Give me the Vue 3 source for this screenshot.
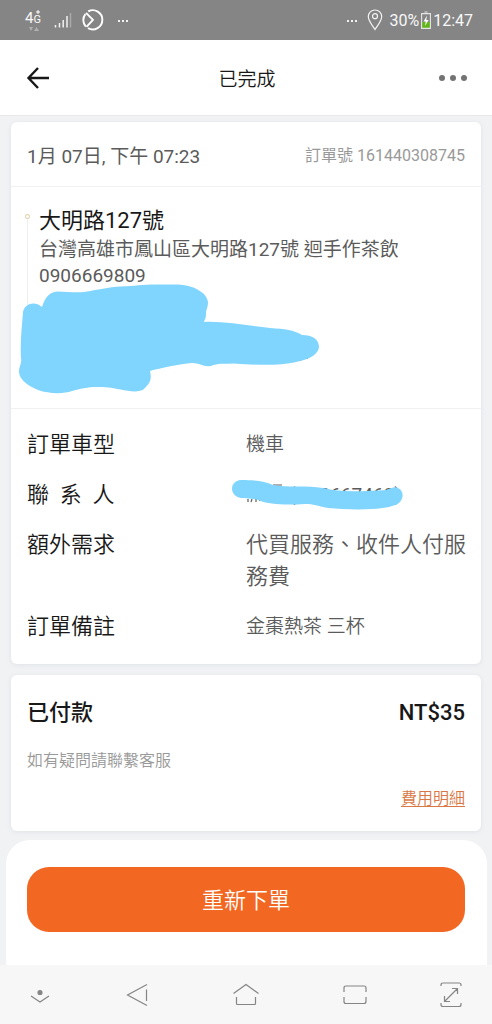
<script setup>
const details = [
  { label: '訂單車型', value: '機車' },
  { label: '聯  系  人', masked: true },
  { label: '額外需求', value: '代買服務、收件人付服務費', large: true },
  { label: '訂單備註', value: '金棗熱茶 三杯' },
]
</script>

<template>
  <div class="screen">
    <div class="status">
      <div class="status-side">
        <span class="network">
          <span class="gen">4<small>G</small></span>
          <svg width="18" height="22" viewBox="0 0 18 22" aria-hidden="true">
            <path d="M3 18h4l-2 4zM8 22h5l-2.500-4z" fill="#b0b0b0" />
            <path d="M12 1v4M10 3h4" stroke="#fff" fill="none" />
          </svg>
        </span>
        <svg class="signal" width="18" height="16" viewBox="0 0 18 16" aria-hidden="true">
          <path d="M1.500 13v2.500M5.500 11v4.500M9.200 8v7.500M13 4v11.500" stroke="#f2f2f2" stroke-width="1.500" fill="none" />
          <path d="M16.500 1v14.500" stroke="#aaa" stroke-width="1.500" />
        </svg>
        <svg class="sync" width="22" height="22" viewBox="0 0 22 22" aria-hidden="true">
          <path d="M6.200 2.400A9.600 9.600 0 1 1 6 19.200M3.800 17.600A9.600 9.600 0 0 1 3.400 5.200M4 3.800 11 10.800 4.500 17.800" stroke="#fff" stroke-width="1.900" fill="none" stroke-linejoin="round" />
        </svg>
        <span class="dots"><i></i><i></i><i></i></span>
      </div>
      <div class="status-side">
        <span class="dots"><i></i><i></i><i></i></span>
        <svg class="pin" width="16" height="22" viewBox="0 0 16 22" aria-hidden="true">
          <path d="M8 20.500C5 15.500 1.300 12 1.300 7.500a6.700 6.500 0 0 1 13.400 0C14.700 12 11 15.500 8 20.500z" stroke="#f4f4f4" stroke-width="1.200" fill="none" />
          <circle cx="8" cy="7.200" r="2.500" stroke="#f4f4f4" stroke-width="1.200" fill="none" />
        </svg>
        <span>30%</span>
        <svg class="battery" width="10" height="18" viewBox="0 0 10 18" aria-hidden="true">
          <path d="M1 11h8v6H1z" fill="#62b51b" />
          <path d="M.6 2.600h8.800v14.800H.6zM3.500 1h3" stroke="#e6e6e6" stroke-width="1.100" fill="none" />
          <path d="M6 4.500 2.600 10.400h2.200L4 15l3.600-6H5.300z" fill="#fff" />
        </svg>
        <span>12:47</span>
      </div>
    </div>

    <header class="bar">
      <button class="icon-button" type="button" aria-label="返回">
        <svg width="24" height="24" viewBox="0 0 24 24"><path d="M12 2 2.500 12 12 22M2.500 12H23" stroke="#181818" stroke-width="2.400" fill="none" /></svg>
      </button>
      <h1>已完成</h1>
      <button class="icon-button" type="button" aria-label="更多">
        <svg width="30" height="24" viewBox="0 0 30 24" fill="#737373"><circle cx="4" cy="12" r="3" /><circle cx="15" cy="12" r="3" /><circle cx="26" cy="12" r="3" /></svg>
      </button>
    </header>

    <main>
      <section class="card">
        <div class="order-head">
          <time>1月 07日, 下午 07:23</time>
          <span class="order-no">訂單號 161440308745</span>
        </div>
        <div class="route">
          <span class="rail"></span>
          <div class="stop">
            <h2>大明路127號</h2>
            <p>台灣高雄市鳳山區大明路127號 迴手作茶飲</p>
            <p>0906669809</p>
          </div>
          <svg class="scribble" width="300" height="110" viewBox="19 284 300 110" aria-hidden="true">
            <path d="M305 357l3 1" stroke="#555" stroke-width="2" />
            <path d="M42 307C45 297 50 292 57 291.500C67 291.500 75 293 84 292C98 290 108 287 121 286.500C134 286 143 284.500 156 284.500H178C192 285 207 292 208 302C208 308 206 309 206 314C206 318 205 319 204 322C225 321 250 326 270 328C285 329 294 330 302 335C312 335 319 339 319 347C318 356 306 360 296 362C280 366 255 365 233 363.500C223 364 218 363 211 366C203 367 200 363 192 363C180 364 160 368 150 371C152 380 150 383 144 389C136 395 118 388 108 387.500C92 386 82 388 72 391C64 394 49 394 38 390C28 386 19 379 19 372C19 366 22 364 21 358C20 342 22 326 23 312C25 303 35 301 42 307Z" fill="#80d5ff" />
          </svg>
        </div>
        <dl class="details">
          <div v-for="row in details" :key="row.label" class="row">
            <dt>{{ row.label }}</dt>
            <dd v-if="row.masked" class="masked">
              <span class="open">(</span><span>0667468)</span>
              <svg width="172" height="32" viewBox="231 479 172 32" aria-hidden="true">
                <path d="M248 499v3M252 499l-1 3M256 499v3M259 499l1 2M273 485h9M274 487h8" stroke="#5b5b5b" stroke-width="1.200" />
                <path d="M241 480C254 480 264 481 273 485C287 488 307 485 323 488C341 493 367 491 386 490C391 488 395 486 398 488C404 491 404 498 399 503C388 511 350 510 328 508C317 506 314 504 305 504C287 505 270 505 258 500C251 498 247 499 241 498C229 496 229 481 241 480Z" fill="#80d5ff" />
              </svg>
            </dd>
            <dd v-else :class="{ large: row.large }">{{ row.value }}</dd>
          </div>
        </dl>
      </section>

      <section class="card payment">
        <div class="paid"><span>已付款</span><span>NT$35</span></div>
        <p>如有疑問請聯繫客服</p>
        <a href="#">費用明細</a>
      </section>
    </main>

    <footer class="sheet">
      <button class="reorder" type="button">重新下單</button>
    </footer>

    <nav class="system">
      <button type="button" aria-label="隱藏導覽列">
        <svg width="24" height="28" viewBox="0 0 24 28"><circle class="dot" cx="12" cy="11.500" r="2" /><path d="m3 15 9 6 9-6" /></svg>
      </button>
      <button type="button" aria-label="返回">
        <svg width="42" height="28" viewBox="0 0 42 28"><path d="M31 3.500 11.500 14l19.500 10.500M30.500 8.500V20" /></svg>
      </button>
      <button type="button" aria-label="主畫面">
        <svg width="28" height="28" viewBox="0 0 28 28"><path d="M1.500 12.500 14 3.500l12.500 9M4.500 16v6.500q0 1 1 1h17q1 0 1-1V16" /></svg>
      </button>
      <button type="button" aria-label="最近使用">
        <svg width="26" height="28" viewBox="0 0 26 28"><path d="M2 11V7q0-2 2-2h18q2 0 2 2v4M2 16v4.500q0 2 2 2h18q2 0 2-2V16" /></svg>
      </button>
      <button type="button" aria-label="全螢幕">
        <svg width="24" height="28" viewBox="0 0 24 28"><path d="M2 5V4q0-2 2-2h16q2 0 2 2v1M2 22v1.500q0 2 2 2h16q2 0 2-2V22M5.500 20.500 18.500 7.500M13 7.500h5.500V13M5.500 15v5.500H11" /></svg>
      </button>
    </nav>
  </div>
</template>

<style>
body {
  margin: 0;
  background: #f1f2f4;
}
</style>

<style scoped>
.screen {
  display: flex;
  flex-direction: column;
  min-height: 100vh;
  background: #f1f2f4;
  color: #181818;
  font-family: Roboto, "Noto Sans CJK TC", sans-serif;
}
h1, h2, p, dl, dd {
  margin: 0;
  font-weight: 400;
}
button {
  border: 0;
  padding: 0;
  background: none;
  font: inherit;
}
svg {
  display: block;
}
.status {
  display: flex;
  justify-content: space-between;
  height: 40px;
  padding: 0 19px 0 25px;
  background: #858585;
  color: #f8f8f8;
  font-size: 16px;
}
.status-side {
  display: flex;
  align-items: center;
}
.network {
  position: relative;
  width: 17px;
  height: 22px;
}
.network svg {
  position: absolute;
  top: 0;
  left: 1px;
}
.gen {
  display: flex;
  align-items: baseline;
  font-size: 15px;
  line-height: 18px;
}
.gen small {
  font-size: 11px;
}
.signal {
  margin-left: 12px;
}
.sync {
  margin-left: 10px;
}
.dots {
  display: flex;
  gap: 2px;
  margin: 2px 0 0 14px;
}
.dots i {
  width: 2px;
  height: 2px;
  background: #f2f2f2;
}
.pin {
  margin: 0 6px 0 10px;
}
.battery {
  margin: 0 2px;
}
.bar {
  display: flex;
  align-items: center;
  justify-content: space-between;
  height: 75px;
  padding: 0 24px 0 26px;
  border-bottom: 1px solid #e8e8e8;
  background: #fff;
}
.bar h1 {
  font-size: 19px;
  font-weight: 350;
}
.icon-button {
  display: flex;
  width: 30px;
}
main {
  display: flex;
  flex-direction: column;
  gap: 11px;
  padding: 6px 11px 9px;
}
.card {
  border-radius: 6px;
  background: #fff;
  box-shadow: 0 1px 5px #dfe2e5;
}
.order-head {
  display: flex;
  align-items: center;
  justify-content: space-between;
  height: 64px;
  padding: 0 16px;
  border-bottom: 1px solid #f1f1f1;
  color: #5b5b5b;
  font-size: 19px;
}
.order-no {
  color: #999;
  font-size: 16px;
}
.route {
  position: relative;
  display: flex;
  min-height: 185px;
  padding: 18px 16px;
  border-bottom: 1px solid #f1f1f1;
}
.rail {
  width: 1px;
  margin: 9px 11px 30px 0;
  background: #eee;
}
.rail::before {
  content: "";
  display: block;
  width: 3px;
  height: 3px;
  margin-left: -2px;
  border: 1px solid #dfc99f;
  border-radius: 50%;
  background: #fff;
}
.stop h2 {
  font-size: 22px;
  line-height: 32px;
}
.stop p {
  color: #5b5b5b;
  font-size: 19px;
  line-height: 26px;
}
.scribble {
  position: absolute;
  top: 97px;
  left: 8px;
}
.details {
  display: flex;
  flex-direction: column;
  gap: 18px;
  padding: 20px 15px 21px 16px;
}
.row {
  display: grid;
  grid-template-columns: 1fr 220px;
  line-height: 32px;
}
.row dt {
  font-size: 22px;
  font-weight: 350;
  white-space: pre;
}
.row dd {
  color: #5b5b5b;
  font-size: 19px;
  font-weight: 350;
}
.row .large {
  font-size: 22px;
}
.row .masked {
  position: relative;
  padding-left: 43px;
  font-weight: 400;
}
.open {
  margin-right: 24px;
}
.masked svg {
  position: absolute;
  top: 0;
  left: -15px;
}
.payment {
  display: flex;
  flex-direction: column;
  padding: 22px 16px 20px;
  font-size: 16px;
  line-height: 24px;
}
.paid {
  display: flex;
  justify-content: space-between;
  margin-bottom: 20px;
  font-size: 22px;
  font-weight: 500;
  line-height: 32px;
}
.payment p {
  margin-bottom: 14px;
  color: #999;
  font-weight: 350;
}
.payment a {
  align-self: flex-end;
  color: #d97845;
  font-weight: 350;
  text-underline-offset: 2px;
}
.sheet {
  flex: 1;
  margin: 0 5px 0 6px;
  padding: 27px 22px 33px 21px;
  border-radius: 24px 24px 0 0;
  background: #fff;
}
.reorder {
  display: block;
  width: 100%;
  height: 65px;
  padding-bottom: 3px;
  border-radius: 22px;
  background: #f26722;
  color: #fff;
  font-size: 22px;
  font-weight: 350;
}
.system {
  display: flex;
  align-items: center;
  height: 59px;
  padding: 0 29px 0 28px;
  background: #f7f7f7;
}
.system button {
  display: flex;
  flex: 1;
  justify-content: center;
}
.system button:first-child {
  flex: 0 0 54px;
  justify-content: flex-start;
}
.system button:last-child {
  flex: 0 0 54px;
  justify-content: flex-end;
}
.system svg {
  fill: none;
  stroke: #858585;
  stroke-width: 1.2;
}
.system .dot {
  fill: #858585;
}
</style>
